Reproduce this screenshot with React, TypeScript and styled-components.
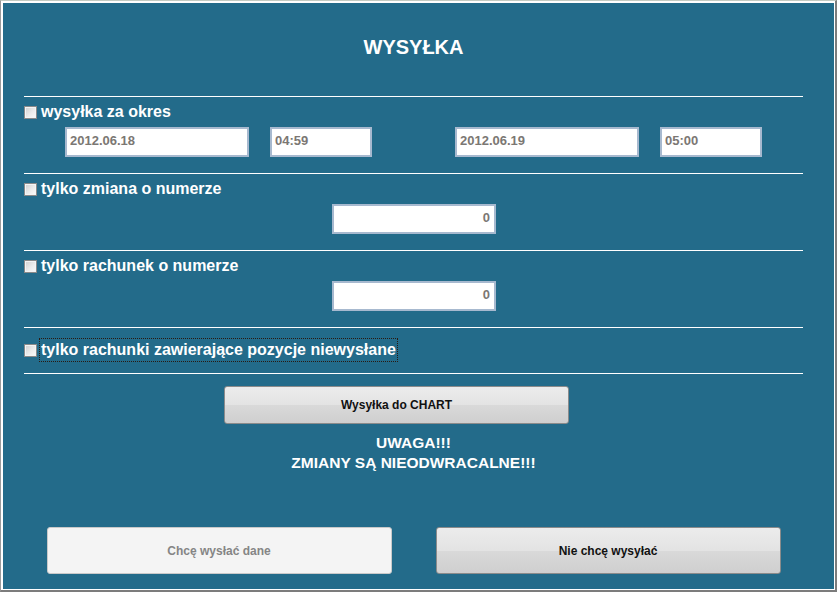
import styled, { createGlobalStyle } from "styled-components";

const GlobalStyle = createGlobalStyle`
  html, body {
    margin: 0;
    padding: 0;
    background: #ffffff;
  }
  body {
    font-family: "Liberation Sans", Arial, sans-serif;
  }
`;

const Frame = styled.div`
  box-sizing: border-box;
  width: 837px;
  height: 592px;
  border-top: 1px solid #c4cbc2;
  border-left: 1px solid #9a9a9a;
  border-right: 2px solid #7c7c7c;
  border-bottom: 2px solid #7c7c7c;
`;

const Panel = styled.div`
  box-sizing: border-box;
  height: 100%;
  background: #236b8a;
  border-top: 2px solid #ffffff;
  border-left: 2px solid #ffffff;
  border-right: 1px solid #ffffff;
  border-bottom: 1px solid #ffffff;
  padding: 32px 0 0 21px;
`;

const Content = styled.div`
  width: 779px;
`;

const Title = styled.h1`
  margin: 0 0 37px;
  height: 24px;
  line-height: 24px;
  text-align: center;
  color: #ffffff;
  font-size: 20px;
  font-weight: bold;
`;

const Section = styled.section<{ $last?: boolean }>`
  border-top: 1px solid #ffffff;
  padding-bottom: ${(p) => (p.$last ? "11px" : "16px")};
`;

const CheckRow = styled.label<{ $tall?: boolean }>`
  display: flex;
  align-items: center;
  height: ${(p) => (p.$tall ? "24px" : "20px")};
  margin-top: ${(p) => (p.$tall ? "10px" : "5px")};
  color: #ffffff;
  font-size: 16px;
  font-weight: bold;
  cursor: default;
`;

const Box = styled.span`
  box-sizing: border-box;
  width: 13px;
  height: 13px;
  margin-right: 2px;
  border: 1px solid #8a8a8a;
  background: linear-gradient(135deg, #cfcfcf 0%, #ececec 55%, #fbfbfb 100%);
  box-shadow: inset 0 0 0 1px #f4f4f4;
  flex: none;
`;

const LabelText = styled.span<{ $focused?: boolean }>`
  padding: 0 1px;
  line-height: 22px;
  border: 1px ${(p) => (p.$focused ? "dotted #2a1a10" : "solid transparent")};
`;

const InputRow = styled.div<{ $center?: boolean }>`
  display: flex;
  margin-top: 5px;
  padding-left: ${(p) => (p.$center ? "308px" : "41px")};
`;

const Field = styled.input<{ $w: number; $gap?: number; $right?: boolean }>`
  box-sizing: border-box;
  flex: none;
  width: ${(p) => p.$w}px;
  height: 30px;
  margin: 0 ${(p) => p.$gap ?? 0}px 0 0;
  padding: 2px ${(p) => (p.$right ? "4px" : "3px")} 6px 3px;
  border: 2px solid #a7b9cf;
  background: #ffffff;
  color: #7b7773;
  font-family: "Liberation Sans", Arial, sans-serif;
  font-size: 13px;
  font-weight: bold;
  text-align: ${(p) => (p.$right ? "right" : "left")};
  outline: none;
`;

const MainButton = styled.button`
  box-sizing: border-box;
  width: 345px;
  height: 38px;
  margin: 12px 0 0 200px;
  display: block;
  border: 1px solid #8b8b8b;
  border-radius: 3px;
  background: linear-gradient(#ececec 0%, #e3e3e3 50%, #d9d9d9 51%, #cfcfcf 100%);
  color: #111111;
  font-family: "Liberation Sans", Arial, sans-serif;
  font-size: 12px;
  font-weight: bold;
`;

const Warning = styled.div`
  margin-top: 9px;
  text-align: center;
  color: #ffffff;
  font-size: 15.5px;
  font-weight: bold;
  line-height: 20px;
`;

const Footer = styled.div`
  display: flex;
  justify-content: center;
  gap: 44px;
  margin-top: 54px;
`;

const ChoiceButton = styled.button<{ $disabled?: boolean }>`
  box-sizing: border-box;
  width: 345px;
  height: 47px;
  border: 1px solid ${(p) => (p.$disabled ? "#c9c9c9" : "#8b8b8b")};
  border-radius: 3px;
  background: ${(p) =>
    p.$disabled
      ? "#f4f4f4"
      : "linear-gradient(#ececec 0%, #e3e3e3 50%, #d9d9d9 51%, #cfcfcf 100%)"};
  color: ${(p) => (p.$disabled ? "#858585" : "#111111")};
  font-family: "Liberation Sans", Arial, sans-serif;
  font-size: 12px;
  font-weight: bold;
`;

export default function App() {
  return (
    <>
      <GlobalStyle />
      <Frame>
        <Panel>
          <Content>
            <Title>WYSYŁKA</Title>

            <Section>
              <CheckRow>
                <Box />
                <LabelText>wysyłka za okres</LabelText>
              </CheckRow>
              <InputRow>
                <Field $w={184} $gap={21} defaultValue="2012.06.18" readOnly />
                <Field $w={102} $gap={83} defaultValue="04:59" readOnly />
                <Field $w={184} $gap={21} defaultValue="2012.06.19" readOnly />
                <Field $w={102} defaultValue="05:00" readOnly />
              </InputRow>
            </Section>

            <Section>
              <CheckRow>
                <Box />
                <LabelText>tylko zmiana o numerze</LabelText>
              </CheckRow>
              <InputRow $center>
                <Field $w={164} $right defaultValue="0" readOnly />
              </InputRow>
            </Section>

            <Section>
              <CheckRow>
                <Box />
                <LabelText>tylko rachunek o numerze</LabelText>
              </CheckRow>
              <InputRow $center>
                <Field $w={164} $right defaultValue="0" readOnly />
              </InputRow>
            </Section>

            <Section $last>
              <CheckRow $tall>
                <Box />
                <LabelText $focused>tylko rachunki zawierające pozycje niewysłane</LabelText>
              </CheckRow>
            </Section>

            <Section>
              <MainButton>Wysyłka do CHART</MainButton>
              <Warning>
                UWAGA!!!
                <br />
                ZMIANY SĄ NIEODWRACALNE!!!
              </Warning>
              <Footer>
                <ChoiceButton $disabled>Chcę wysłać dane</ChoiceButton>
                <ChoiceButton>Nie chcę wysyłać</ChoiceButton>
              </Footer>
            </Section>
          </Content>
        </Panel>
      </Frame>
    </>
  );
}
